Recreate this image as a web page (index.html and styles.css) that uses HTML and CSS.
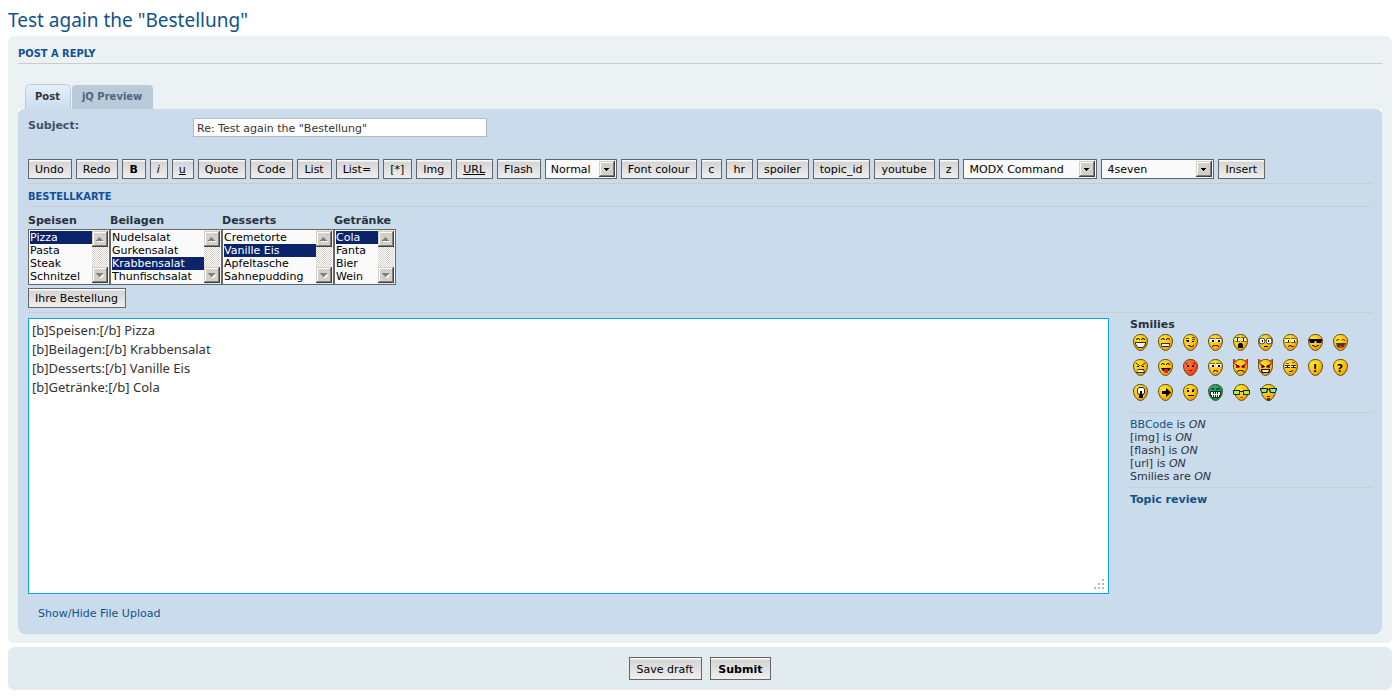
FILE: index.html
```html
<!DOCTYPE html>
<html lang="en">
<head>
  <meta charset="UTF-8">
  <meta name="viewport" content="width=device-width, initial-scale=1.0">
  <title>Post a reply</title>
  <link rel="stylesheet" href="styles.css">
</head>
<body>
  <!-- shared smiley parts -->
  <svg class="defs" aria-hidden="true">
    <defs>
      <radialGradient id="yellow" cx="0.35" cy="0.3" r="0.8">
        <stop offset="0" stop-color="#ffe92e"/>
        <stop offset="0.5" stop-color="#fdc60b"/>
        <stop offset="1" stop-color="#f08a00"/>
      </radialGradient>
      <radialGradient id="red" cx="0.35" cy="0.3" r="0.8">
        <stop offset="0" stop-color="#ff7a3c"/>
        <stop offset="1" stop-color="#ee3808"/>
      </radialGradient>
      <radialGradient id="green" cx="0.35" cy="0.3" r="0.8">
        <stop offset="0" stop-color="#1cc07c"/>
        <stop offset="1" stop-color="#008a4c"/>
      </radialGradient>
      <path id="egg" stroke="#5f4a1c" d="M7.5 .5C11.5 .5 14.5 3 14.5 7C14.5 11.5 11 16.5 7.5 16.5C4 16.5 .5 11.5 .5 7C.5 3 3.5 .5 7.5 .5Z"/>
      <path id="happy-eyes" fill="none" stroke="#3a2600" d="M3 5.5h1v-1h2v1h1M8 5.5h1v-1h2v1h1"/>
      <g id="white-eyes">
        <path fill="#7a5c1c" d="M2 4h5v1h-5zM8 4h5v1h-5z"/>
        <path fill="#fff" d="M2 5h5v3h-5zM8 5h5v3h-5z"/>
        <path fill="#000" d="M4 6h2v2h-2zM10 6h2v2h-2z"/>
      </g>
      <g id="horns">
        <path fill="#f03c28" d="M0 0h1l3 2l-3 3h-1zM15 0h-1l-3 2l3 3h1z"/>
        <path fill="none" stroke="#6a4a30" d="M.5 0v5M14.5 0v5"/>
      </g>
      <g id="evil-eyes">
        <path fill="#f00000" d="M3 6h3v3h-3zM9 6h3v3h-3z"/>
        <path fill="none" stroke="#300" d="M2 5L7 8M13 5L8 8"/>
        <path fill="#000" d="M4 7h1v1h-1zM10 7h1v1h-1z"/>
      </g>
    </defs>
  </svg>

  <h2 class="topic-title"><a href="#">Test again the "Bestellung"</a></h2>

  <form class="post-form">
    <div class="panel">
      <h3 class="heading">Post a reply</h3>

      <div class="tabs">
        <a class="tab tab-active" href="#post">Post</a>
        <a class="tab" href="#preview">jQ Preview</a>
      </div>

      <div class="corners">
        <div class="editor" id="post">
          <div class="subject-row">
            <label class="subject-label" for="subject">Subject:</label>
            <input class="inputbox" type="text" id="subject" value="Re: Test again the &quot;Bestellung&quot;">
          </div>

          <div class="toolbar">
            <button class="btn" type="button">Undo</button>
            <button class="btn" type="button">Redo</button>
            <button class="btn btn-bold" type="button">B</button>
            <button class="btn btn-italic" type="button">i</button>
            <button class="btn btn-underline" type="button">u</button>
            <button class="btn" type="button">Quote</button>
            <button class="btn" type="button">Code</button>
            <button class="btn" type="button">List</button>
            <button class="btn" type="button">List=</button>
            <button class="btn" type="button">[*]</button>
            <button class="btn" type="button">Img</button>
            <button class="btn btn-underline" type="button">URL</button>
            <button class="btn" type="button">Flash</button>
            <select class="drop drop-size" aria-label="Font size">
              <option>Tiny</option>
              <option>Small</option>
              <option selected>Normal</option>
              <option>Large</option>
              <option>Huge</option>
            </select>
            <button class="btn" type="button">Font colour</button>
            <button class="btn" type="button">c</button>
            <button class="btn" type="button">hr</button>
            <button class="btn" type="button">spoiler</button>
            <button class="btn" type="button">topic_id</button>
            <button class="btn" type="button">youtube</button>
            <button class="btn" type="button">z</button>
            <select class="drop drop-command" aria-label="MODX Command">
              <option>MODX Command</option>
            </select>
            <select class="drop drop-user" aria-label="User">
              <option>4seven</option>
            </select>
            <button class="btn" type="button">Insert</button>
          </div>

          <h3 class="heading heading-card">Bestellkarte</h3>

          <div class="order">
            <div class="order-col">
              <label for="speisen">Speisen</label>
              <select class="list list-narrow" id="speisen" size="4" multiple>
                <option selected>Pizza</option>
                <option>Pasta</option>
                <option>Steak</option>
                <option>Schnitzel</option>
              </select>
            </div>
            <div class="order-col">
              <label for="beilagen">Beilagen</label>
              <select class="list list-wide" id="beilagen" size="4" multiple>
                <option>Nudelsalat</option>
                <option>Gurkensalat</option>
                <option selected>Krabbensalat</option>
                <option>Thunfischsalat</option>
              </select>
            </div>
            <div class="order-col">
              <label for="desserts">Desserts</label>
              <select class="list list-wide" id="desserts" size="4" multiple>
                <option>Cremetorte</option>
                <option selected>Vanille Eis</option>
                <option>Apfeltasche</option>
                <option>Sahnepudding</option>
              </select>
            </div>
            <div class="order-col">
              <label for="getraenke">Getränke</label>
              <select class="list list-small" id="getraenke" size="4" multiple>
                <option selected>Cola</option>
                <option>Fanta</option>
                <option>Bier</option>
                <option>Wein</option>
              </select>
            </div>
          </div>
          <button class="btn" type="button">Ihre Bestellung</button>

          <hr class="rule">

          <div class="compose">
            <textarea class="message" aria-label="Message">[b]Speisen:[/b] Pizza
[b]Beilagen:[/b] Krabbensalat
[b]Desserts:[/b] Vanille Eis
[b]Getränke:[/b] Cola</textarea>

            <div class="sidebar">
              <strong>Smilies</strong>
              <div class="smilies">
                <a href="#" aria-label="Very Happy"><svg class="smiley" viewBox="0 0 15 17"><use href="#egg" fill="url(#yellow)"/><use href="#happy-eyes"/><path fill="#3a2600" d="M2 8h11v2l-2 3l-1 1h-5l-1-1l-2-3z"/><path fill="#fff" d="M3 9h9v1l-2 3h-5l-2-3z"/></svg></a>
                <a href="#" aria-label="Smile"><svg class="smiley" viewBox="0 0 15 17"><use href="#egg" fill="url(#yellow)"/><use href="#happy-eyes"/><path fill="#3a2600" d="M3 9h9v2l-1 2h-7l-1-2z"/><path fill="#fff" d="M4 10h7v2h-7z"/></svg></a>
                <a href="#" aria-label="Wink"><svg class="smiley" viewBox="0 0 15 17"><use href="#egg" fill="url(#yellow)"/><path fill="none" stroke="#5a3c00" d="M3 4.5h3M9 5.5h3M9 3.5h3"/><path d="M3 6h3v2h-2zM9 7h2v1h-2z"/><path fill="none" stroke="#3a2600" d="M5 11.5h2v1h3v-1h1"/></svg></a>
                <a href="#" aria-label="Sad"><svg class="smiley" viewBox="0 0 15 17"><use href="#egg" fill="url(#yellow)"/><use href="#white-eyes"/><path fill="none" stroke="#3a2600" d="M4 12.5h1v-1h5v1h1"/></svg></a>
                <a href="#" aria-label="Surprised"><svg class="smiley" viewBox="0 0 15 17"><use href="#egg" fill="url(#yellow)"/><path fill="#7a5c1c" d="M2 3h5v5h-5zM8 3h5v5h-5z"/><path fill="#fff" d="M2 4h5v3h-5zM8 4h5v3h-5z"/><path d="M4 4h1v3h-1zM10 4h1v3h-1zM6 9h3l1 2v3h-5v-3z"/></svg></a>
                <a href="#" aria-label="Shocked"><svg class="smiley" viewBox="0 0 15 17"><use href="#egg" fill="url(#yellow)"/><circle cx="4" cy="7" r="3" fill="#fff" stroke="#444"/><circle cx="11" cy="7" r="3" fill="#fff" stroke="#444"/><path d="M4 6h1v2h-1zM10 6h1v2h-1zM6 12h4v1h-4z"/></svg></a>
                <a href="#" aria-label="Confused"><svg class="smiley" viewBox="0 0 15 17"><use href="#egg" fill="url(#yellow)"/><path fill="#7a5c1c" d="M2 4h5v5h-5zM8 4h5v5h-5z"/><path fill="#fff" d="M2 5h5v3h-5zM8 5h5v3h-5z"/><path d="M5 6h1v2h-1zM11 6h1v2h-1z"/><path fill="none" stroke="#3a2600" d="M5 12.5h1v-1h2v1h3"/></svg></a>
                <a href="#" aria-label="Cool"><svg class="smiley" viewBox="0 0 15 17"><use href="#egg" fill="url(#yellow)"/><path d="M1 5h13v1l-1 3h-4l-1-2h-1l-1 2h-4l-1-3z"/><path fill="none" stroke="#3a2600" d="M4 11.5h2v1h3v-1h2"/></svg></a>
                <a href="#" aria-label="Laughing"><svg class="smiley" viewBox="0 0 15 17"><use href="#egg" fill="url(#yellow)"/><path fill="none" stroke="#7a4600" d="M3 6.5h1v-1h2v1M9 6.5v-1h2v1h1"/><path fill="#4a3838" d="M3 9h10l-2 4l-2 1h-3l-2-1z"/><path fill="#f02818" d="M6 12h4v2h-4z"/></svg></a>
                <a href="#" aria-label="Mad"><svg class="smiley" viewBox="0 0 15 17"><use href="#egg" fill="url(#yellow)"/><path fill="none" stroke="#3a2600" d="M3 4l4 3M12 4l-4 3"/><path d="M4 7h2v1h-2zM9 7h2v1h-2z"/><path fill="#3a2600" d="M5 10h6l1 4h-9z"/><path fill="#fff" d="M5 11h5l1 2h-7z"/></svg></a>
                <a href="#" aria-label="Razz"><svg class="smiley" viewBox="0 0 15 17"><use href="#egg" fill="url(#yellow)"/><use href="#happy-eyes"/><path d="M3 9h10l-2 3h-6z"/><path fill="#f01818" d="M6 10h4v4h-3l-1-1z"/></svg></a>
                <a href="#" aria-label="Embarrassed"><svg class="smiley" viewBox="0 0 15 17"><use href="#egg" fill="url(#red)"/><path fill="#4a1000" d="M4 6h2v2h-2zM9 6h2v2h-2z"/><path fill="none" stroke="#7a1800" d="M3 5l2-1M12 5l-2-1M6 11.5h3"/></svg></a>
                <a href="#" aria-label="Crying"><svg class="smiley" viewBox="0 0 15 17"><use href="#egg" fill="url(#yellow)"/><use href="#white-eyes"/><path fill="#a8d8f4" d="M3 8h1v5h-1zM11 8h1v5h-1z"/><path fill="none" stroke="#3a2600" d="M5 12.5h1v-1h3v1h1"/></svg></a>
                <a href="#" aria-label="Evil"><svg class="smiley" viewBox="0 0 15 17"><use href="#egg" fill="url(#yellow)"/><use href="#horns"/><use href="#evil-eyes"/><path fill="none" stroke="#3a2600" d="M4 13.500v-1h1v-1h5v1h1v1"/></svg></a>
                <a href="#" aria-label="Twisted Evil"><svg class="smiley" viewBox="0 0 15 17"><use href="#egg" fill="url(#yellow)"/><use href="#horns"/><use href="#evil-eyes"/><path fill="#200" d="M3 10h9v2l-1 2h-7l-1-2z"/><path fill="#fff" d="M4 11h7l-1 2h-5z"/></svg></a>
                <a href="#" aria-label="Rolling Eyes"><svg class="smiley" viewBox="0 0 15 17"><use href="#egg" fill="url(#yellow)"/><path fill="#3a2600" d="M2 6h5v3h-5zM8 6h5v3h-5z"/><path fill="#fff" d="M2 7h5v1h-5zM8 7h5v1h-5z"/><path d="M4 7h1v1h-1zM10 7h1v1h-1z"/><path fill="none" stroke="#8a5a00" d="M3 4.500h3M9 3.500h3"/><path fill="none" stroke="#3a2600" d="M6 12.500h3v-1h1"/></svg></a>
                <a href="#" aria-label="Exclamation"><svg class="smiley" viewBox="0 0 15 17"><use href="#egg" fill="url(#yellow)"/><text class="mark" x="7" y="13">!</text></svg></a>
                <a href="#" aria-label="Question"><svg class="smiley" viewBox="0 0 15 17"><use href="#egg" fill="url(#yellow)"/><text class="mark" x="7" y="13">?</text></svg></a>
                <a href="#" aria-label="Idea"><svg class="smiley" viewBox="0 0 15 17"><use href="#egg" fill="url(#yellow)"/><path fill="#222" d="M6 3h4l2 2v4l-2 2h-4l-2-2v-4z"/><path fill="#fff" d="M6 4h4l1 1v4l-2 1h-2l-2-1v-4z"/><path d="M6 11h4v3h-4zM7 7h2v4h-2z"/></svg></a>
                <a href="#" aria-label="Arrow"><svg class="smiley" viewBox="0 0 15 17"><use href="#egg" fill="url(#yellow)"/><path d="M4 7h4v-3l5 4.500l-5 4.500v-3h-4z"/></svg></a>
                <a href="#" aria-label="Neutral"><svg class="smiley" viewBox="0 0 15 17"><use href="#egg" fill="url(#yellow)"/><path d="M4 6h2v2h-2zM9 6h2v2h-2zM5 11h6v1h-6z"/><path fill="none" stroke="#8a5a00" d="M3 4.500h3M9 5.500h3"/></svg></a>
                <a href="#" aria-label="Mr. Green"><svg class="smiley" viewBox="0 0 15 17"><use href="#egg" fill="url(#green)"/><use href="#happy-eyes"/><path fill="#003a20" d="M2 7h11v4l-2 3h-7l-2-3z"/><path fill="#fff" d="M3 8h2v2h-2zM6 8h1v2h-1zM8 8h1v2h-1zM10 8h2v2h-2zM4 11h1v2h-1zM6 11h1v2h-1zM8 11h1v2h-1zM10 11h1v2h-1zM3 10h9v1h-9z"/></svg></a>
                <a href="#" aria-label="Geek"><svg class="smiley smiley-wide" viewBox="-1 0 17 17"><use href="#egg" fill="url(#yellow)"/><path fill="#142a08" d="M-1 6h7v1h3v-1h7v4l-1 1h-6v-3h-3v3h-6l-1-1z"/><path fill="#a8f058" d="M0 7h5v3h-5zM10 7h5v3h-5z"/><path fill="none" stroke="#8a5a00" d="M6 13.500h3"/></svg></a>
                <a href="#" aria-label="Uber Geek"><svg class="smiley smiley-wide" viewBox="-1 0 17 17"><use href="#egg" fill="url(#yellow)"/><path fill="#10241a" d="M-1 4h8v1h1v-1h8v2l-2 3h-5l-1-3h-1l-1 3h-5l-2-3z"/><path fill="#98e0a8" d="M0 5h6l-1 3h-4zM9 5h6l-1 3h-4z"/><path fill="none" stroke="#3a2600" d="M6 12.500h3"/><path fill="#333" d="M6 14h3v2l-1 1h-1l-1-1z"/></svg></a>
              </div>
              <hr class="rule">
              <ul class="status">
                <li><a href="#">BBCode</a> is <em>ON</em></li>
                <li>[img] is <em>ON</em></li>
                <li>[flash] is <em>ON</em></li>
                <li>[url] is <em>ON</em></li>
                <li>Smilies are <em>ON</em></li>
              </ul>
              <hr class="rule">
              <strong><a href="#">Topic review</a></strong>
            </div>
          </div>

          <a class="upload-link" href="#">Show/Hide File Upload</a>
        </div>
      </div>
    </div>

    <div class="panel panel-submit">
      <button class="btn btn-large" type="button">Save draft</button>
      <button class="btn btn-large btn-bold" type="submit">Submit</button>
    </div>
  </form>
</body>
</html>
```
FILE: styles.css
```css
* {
  box-sizing: border-box;
}
body {
  margin: 0;
  padding: 8px;
  background: #fff;
  color: #28313f;
  font-family: Verdana, "DejaVu Sans", sans-serif;
  font-size: 11px;
  line-height: 13px;
}
a {
  color: #105289;
  text-decoration: none;
}
a:hover {
  text-decoration: underline;
}
.defs {
  position: absolute;
  width: 0;
  height: 0;
}
.topic-title {
  margin: 0 0 4px;
  font-family: "Trebuchet MS", "Noto Sans", sans-serif;
  font-size: 19px;
  font-weight: normal;
  line-height: 24px;
}
.panel {
  margin-bottom: 4px;
  padding: 10px 10px 9px;
  background: #ecf1f3;
  border-radius: 6px;
}
.heading {
  margin: 0 0 20px;
  padding-bottom: 1px;
  border-bottom: 1px solid #ccc;
  color: #115098;
  font-family: Tahoma, "DejaVu Sans Condensed", sans-serif;
  font-size: 11px;
  line-height: 16px;
  text-transform: uppercase;
}

/* tabs */
.tabs {
  display: flex;
  align-items: flex-start;
  gap: 1px;
  padding-left: 7px;
}
.tab {
  height: 24px;
  margin-top: 1px;
  padding: 5px 11px 5px 10px;
  background: #b9cad8;
  border-radius: 4px 4px 0 0;
  color: #536482;
  font-weight: bold;
  font-size: 10px;
}
.tab-active {
  height: 25px;
  margin-top: 0;
  padding: 5px 10px 5px 9px;
  background: linear-gradient(#e3f0fd, #cadceb);
  border: 1px solid #bfcbdb;
  border-bottom: 0;
  border-radius: 6px 6px 0 0;
  color: #333;
}
.corners {
  background: #fff;
}
.editor {
  padding: 9px 10px 14px;
  background: #cadceb;
  border-radius: 6px;
}

/* form controls */
.subject-row {
  display: flex;
  align-items: flex-start;
  margin-bottom: 22px;
}
.subject-label {
  width: 165px;
  padding-top: 1px;
  color: #425067;
  font-weight: bold;
}
.inputbox {
  width: 294px;
  height: 19px;
  padding: 3px 3px 1px;
  border: 1px solid #b4bac0;
  background: #fff;
  color: #333;
  font: inherit;
}
.toolbar {
  display: flex;
  flex-wrap: wrap;
  gap: 4px;
  padding-bottom: 4px;
  border-bottom: 1px solid #ccc;
}
.btn {
  height: 20px;
  padding: 1px 7px 0 6px;
  border: 1px solid #666;
  background: linear-gradient(#fff 1px, #d4d4d4 2px, #efefef);
  color: #000;
  font: inherit;
  line-height: 17px;
}
.btn-bold {
  font-weight: bold;
}
.btn-italic {
  font-style: italic;
}
.btn-underline {
  text-decoration: underline;
}
.btn-large {
  height: 23px;
  padding: 1px 8px 0 7px;
}
.drop {
  height: 20px;
  padding: 1px 20px 0 5px;
  border: 1px solid #666;
  border-radius: 0;
  appearance: none;
  background: #fafafa url("data:image/svg+xml,%3Csvg xmlns='http://www.w3.org/2000/svg' width='16' height='16' shape-rendering='crispEdges'%3E%3Cpath fill='%23404040' d='M0 0h16v16H0z'/%3E%3Cpath fill='%23d4d0c8' d='M0 0h15v15H0z'/%3E%3Cpath fill='%23808080' d='M1 1h14v14H1z'/%3E%3Cpath fill='%23fff' d='M1 1h13v13H1z'/%3E%3Cpath fill='%23d4d0c8' d='M2 2h12v12H2z'/%3E%3Cpath d='M5 7h5v1H5zM6 8h3v1H6zM7 9h1v1H7z'/%3E%3C/svg%3E") no-repeat right 1px center;
  color: #000;
  font: inherit;
}
.drop-size {
  width: 72px;
}
.drop-command {
  width: 134px;
}
.drop-user {
  width: 113px;
}

/* order card */
.heading-card {
  margin-bottom: 7px;
  padding-top: 5px;
}
.order {
  display: flex;
  margin-bottom: 3px;
}
.order-col {
  display: flex;
  flex-direction: column;
  gap: 2px;
}
.order-col label {
  font-weight: bold;
}
/* list box with a classic scrollbar: up button, down button, dithered track */
.list {
  height: 56px;
  padding: 1px 17px 1px 1px;
  border: 1px solid #666;
  border-radius: 0;
  background-color: #fafafa;
  background-image:
    url("data:image/svg+xml,%3Csvg xmlns='http://www.w3.org/2000/svg' width='16' height='16' shape-rendering='crispEdges'%3E%3Cpath fill='%23404040' d='M0 0h16v16H0z'/%3E%3Cpath fill='%23d4d0c8' d='M0 0h15v15H0z'/%3E%3Cpath fill='%23808080' d='M1 1h14v14H1z'/%3E%3Cpath fill='%23fff' d='M1 1h13v13H1z'/%3E%3Cpath fill='%23d4d0c8' d='M2 2h12v12H2z'/%3E%3Cpath fill='%23808080' d='M7 6h1v1H7zM6 7h3v1H6zM5 8h5v1H5zM4 9h7v1H4z'/%3E%3Cpath fill='%23fff' d='M5 10h7v1H5z'/%3E%3C/svg%3E"),
    url("data:image/svg+xml,%3Csvg xmlns='http://www.w3.org/2000/svg' width='16' height='16' shape-rendering='crispEdges'%3E%3Cpath fill='%23404040' d='M0 0h16v16H0z'/%3E%3Cpath fill='%23d4d0c8' d='M0 0h15v15H0z'/%3E%3Cpath fill='%23808080' d='M1 1h14v14H1z'/%3E%3Cpath fill='%23fff' d='M1 1h13v13H1z'/%3E%3Cpath fill='%23d4d0c8' d='M2 2h12v12H2z'/%3E%3Cpath fill='%23fff' d='M8 10h1v-1h1v-1h2v1h-1v1h-1v1H8z'/%3E%3Cpath fill='%23808080' d='M4 6h7v1H4zM5 7h5v1H5zM6 8h3v1H6zM7 9h1v1H7z'/%3E%3C/svg%3E"),
    url("data:image/svg+xml,%3Csvg xmlns='http://www.w3.org/2000/svg' width='16' height='54' shape-rendering='crispEdges'%3E%3Cpattern id='d' width='2' height='2' patternUnits='userSpaceOnUse'%3E%3Cpath fill='%23fff' d='M0 0h2v2H0z'/%3E%3Cpath fill='%23d4d0c8' d='M0 0h1v1H0zM1 1h1v1H1z'/%3E%3C/pattern%3E%3Cpath fill='url(%23d)' d='M0 0h16v54H0z'/%3E%3C/svg%3E");
  background-position: right 1px top 1px, right 1px bottom 1px, right 1px top;
  background-repeat: no-repeat;
  color: #000;
  font: inherit;
  overflow: hidden;
}
.list option {
  height: 13px;
  min-height: 13px;
  padding: 0;
  line-height: 13px;
}
.list option:checked {
  background: linear-gradient(#0a246a, #0a246a);
  color: #fff;
  -webkit-text-fill-color: #fff;
}
.list-narrow {
  width: 82px;
}
.list-wide {
  width: 112px;
}
.list-small {
  width: 62px;
}
.rule {
  height: 1px;
  margin: 4px 0 5px;
  border: 0;
  background: #ccc;
}

/* message and sidebar */
.compose {
  display: flex;
  gap: 21px;
  margin-bottom: 13px;
}
.message {
  flex: 1;
  height: 276px;
  padding: 2px 3px;
  border: 1px solid #11a3ea;
  background: #fff;
  color: #333;
  font-family: "Lucida Grande", "Noto Sans", sans-serif;
  font-size: 13px;
  line-height: 19px;
  outline: 0;
  resize: vertical;
}
.message::-webkit-resizer {
  background: url("data:image/svg+xml,%3Csvg xmlns='http://www.w3.org/2000/svg' width='15' height='15'%3E%3Cpath fill='%23bbb' d='M9 1h2v2H9zM5 5h2v2H5zM9 5h2v2H9zM1 9h2v2H1zM5 9h2v2H5zM9 9h2v2H9z'/%3E%3C/svg%3E") no-repeat;
}
.sidebar {
  width: 242px;
}
.smilies {
  display: flex;
  flex-wrap: wrap;
  gap: 8px 10px;
  padding: 3px 20px 7px 3px;
}
.smilies a {
  height: 17px;
}
.smiley {
  display: block;
  width: 15px;
  height: 17px;
}
.smiley-wide {
  width: 17px;
}
.mark {
  font-size: 11px;
  font-weight: bold;
  text-anchor: middle;
}
.status {
  margin: 0;
  padding: 0;
  list-style: none;
}
.upload-link {
  display: block;
  margin-left: 10px;
}
.panel-submit {
  display: flex;
  justify-content: center;
  gap: 8px;
  margin-bottom: 0;
  padding: 10px;
  background: #e1ebf0;
}
```
